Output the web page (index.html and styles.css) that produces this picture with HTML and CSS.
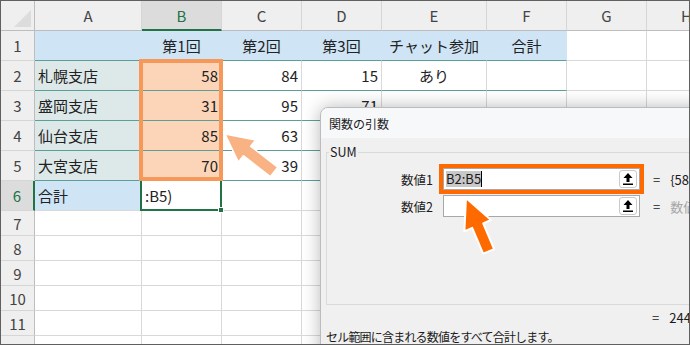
FILE: index.html
```html
<!DOCTYPE html>
<html lang="ja">

<head>
    <meta charset="UTF-8">
    <title>関数の引数 - SUM</title>
    <link rel="stylesheet" href="styles.css">
</head>

<body>
    <div class="frame">
        <div class="sheet">
            <div class="corner"></div>
            <div class="h">A</div><div class="h sel">B</div><div class="h">C</div><div class="h">D</div><div class="h">E</div><div class="h">F</div><div class="h">G</div><div class="h">H</div>

            <div class="rh">1</div>
            <div class="c blue tl"></div><div class="c blue tl ctr">第1回</div><div class="c blue tl ctr">第2回</div><div class="c blue tl ctr">第3回</div><div class="c blue tl ctr">チャット参加</div><div class="c blue tl ctr">合計</div><div class="c"></div><div class="c"></div>

            <div class="rh">2</div>
            <div class="c tint tl">札幌支店</div><div class="c peach tl num">58</div><div class="c tl num">84</div><div class="c tl num">15</div><div class="c tl ctr">あり</div><div class="c tl"></div><div class="c"></div><div class="c"></div>

            <div class="rh">3</div>
            <div class="c tint tl">盛岡支店</div><div class="c peach tl num">31</div><div class="c tl num">95</div><div class="c tl num">71</div><div class="c tl"></div><div class="c tl"></div><div class="c"></div><div class="c"></div>

            <div class="rh">4</div>
            <div class="c tint tl">仙台支店</div><div class="c peach tl num">85</div><div class="c tl num">63</div><div class="c tl"></div><div class="c tl"></div><div class="c tl"></div><div class="c"></div><div class="c"></div>

            <div class="rh">5</div>
            <div class="c tint tl">大宮支店</div><div class="c peach tl num">70</div><div class="c tl num">39</div><div class="c tl"></div><div class="c tl"></div><div class="c tl"></div><div class="c"></div><div class="c"></div>

            <div class="rh sel">6</div>
            <div class="c blue">合計</div><div class="c">:B5)</div><div class="c"></div><div class="c"></div><div class="c"></div><div class="c"></div><div class="c"></div><div class="c"></div>

            <div class="rh">7</div>
            <div class="c"></div><div class="c"></div><div class="c"></div><div class="c"></div><div class="c"></div><div class="c"></div><div class="c"></div><div class="c"></div>
            <div class="rh">8</div>
            <div class="c"></div><div class="c"></div><div class="c"></div><div class="c"></div><div class="c"></div><div class="c"></div><div class="c"></div><div class="c"></div>
            <div class="rh">9</div>
            <div class="c"></div><div class="c"></div><div class="c"></div><div class="c"></div><div class="c"></div><div class="c"></div><div class="c"></div><div class="c"></div>
            <div class="rh">10</div>
            <div class="c"></div><div class="c"></div><div class="c"></div><div class="c"></div><div class="c"></div><div class="c"></div><div class="c"></div><div class="c"></div>
            <div class="rh">11</div>
            <div class="c"></div><div class="c"></div><div class="c"></div><div class="c"></div><div class="c"></div><div class="c"></div><div class="c"></div><div class="c"></div>
            <div class="rh">12</div>
            <div class="c"></div><div class="c"></div><div class="c"></div><div class="c"></div><div class="c"></div><div class="c"></div><div class="c"></div><div class="c"></div>
        </div>

        <!-- reference range and active cell -->
        <div class="active"></div>
        <div class="handle"></div>
        <div class="range"></div>

        <div class="dialog">
            <div class="dlg-title">関数の引数</div>
            <div class="dlg-body">
                <fieldset class="group">
                    <legend>SUM</legend>
                    <div class="args">
                        <span class="lbl">数値1</span>
                        <div class="field hot">
                            <span class="picked">B2:B5</span><span class="caret"></span>
                            <span class="upbtn"><svg width="10" height="12" viewBox="0 0 10 12"><path d="M5 0 9.5 5H6.5V9H3.5V5H.5Z" fill="#000"/><rect x="0" y="10.5" width="10" height="1.5" fill="#000"/></svg></span>
                        </div>
                        <span class="val"><span class="eq">=</span>{58;31;85;70}</span>

                        <span class="lbl">数値2</span>
                        <div class="field">
                            <span></span>
                            <span class="upbtn"><svg width="10" height="12" viewBox="0 0 10 12"><path d="M5 0 9.5 5H6.5V9H3.5V5H.5Z" fill="#000"/><rect x="0" y="10.5" width="10" height="1.5" fill="#000"/></svg></span>
                        </div>
                        <span class="val"><span class="eq">=</span><span class="muted">数値</span></span>
                    </div>
                </fieldset>
                <div class="total"><span class="eq">=</span>244</div>
                <div class="desc">セル範囲に含まれる数値をすべて合計します。</div>
            </div>
        </div>

        <svg class="arrows" width="690" height="345" viewBox="0 0 690 345">
            <polygon points="225,134 255.6,139.9 250.7,146.3 277.7,167.2 270.3,176.6 243.3,155.7 238.4,162.1" fill="#f9b283" stroke="#fff" stroke-width="1.5" stroke-linejoin="round"/>
            <polygon points="466,198 491,220 483.2,223.3 494.1,249.1 483.1,253.7 472.2,227.9 464.4,231.3" fill="#ff6a00" stroke="#fff" stroke-width="2" stroke-linejoin="round"/>
        </svg>
    </div>
</body>

</html>
```

FILE: styles.css
```css
* {
    margin: 0;
    padding: 0;
    box-sizing: border-box;
}

body {
    width: 690px;
    height: 345px;
    overflow: hidden;
    background: #fff;
    font-family: "Noto Sans CJK JP", "Noto Sans", sans-serif;
    color: #222;
}

.frame {
    position: relative;
    width: 690px;
    height: 345px;
    border: 1px solid #606060;
    overflow: hidden;
}

/* grid */

.sheet {
    display: grid;
    grid-template-columns: 34px 107px 80px 80px 80px 105px 80px 80px 80px;
    grid-template-rows: repeat(7, 30px) repeat(6, 25px);
    font-size: 15px;
}

.corner {
    position: relative;
    background: #efefef;
    border-right: 1px solid #bdbdbd;
    border-bottom: 1px solid #bdbdbd;
}

.corner::after {
    content: "";
    position: absolute;
    left: 13px;
    top: 9px;
    width: 17px;
    height: 17px;
    background: #dcdcdc;
    clip-path: polygon(100% 0, 100% 100%, 0 100%);
}

.h {
    background: #efefef;
    border-right: 1px solid #d6d6d6;
    border-bottom: 1px solid #bdbdbd;
    color: #444;
    display: flex;
    align-items: center;
    justify-content: center;
}

.h.sel {
    background: #dcdcdc;
    color: #217346;
    border-bottom: 2px solid #217346;
}

.rh {
    background: #efefef;
    border-right: 1px solid #bdbdbd;
    border-bottom: 1px solid #d6d6d6;
    color: #444;
    display: flex;
    align-items: center;
    justify-content: center;
}

.rh.sel {
    background: #dcdcdc;
    color: #217346;
    border-right: 2px solid #217346;
}

.c {
    background: #fff;
    border-right: 1px solid #d9d9d9;
    border-bottom: 1px solid #d9d9d9;
    display: flex;
    align-items: center;
    padding: 0 3px;
    white-space: nowrap;
    overflow: hidden;
}

.num {
    justify-content: flex-end;
}

.ctr {
    justify-content: center;
}

.blue {
    background: #cfe4f5;
    border-right-color: transparent;
}

.tint {
    background: #dde9e9;
    border-right-color: transparent;
}

.peach {
    background: #fcd5b8;
}

.tl {
    border-bottom-color: #5c9f98;
}

.active {
    position: absolute;
    left: 139px;
    top: 178px;
    width: 82px;
    height: 32px;
    border: 2px solid #217346;
}

.handle {
    position: absolute;
    left: 217px;
    top: 206px;
    width: 6px;
    height: 6px;
    background: #217346;
    border: 1px solid #fff;
}

.range {
    position: absolute;
    left: 138px;
    top: 58px;
    width: 84px;
    height: 122px;
    border: 4px solid #f7985b;
}

/* dialog */

.dialog {
    position: absolute;
    left: 319px;
    top: 106px;
    width: 420px;
    height: 260px;
    background: #f0f0f0;
    border: 1px solid #bcbcbc;
    border-radius: 8px;
    box-shadow: 0 0 18px rgba(0, 0, 0, 0.28);
    overflow: hidden;
    color: #1a1a1a;
    font-size: 12px;
}

.dlg-title {
    height: 30px;
    background: #f7f8fa;
    padding-left: 8px;
    display: flex;
    align-items: center;
}

.dlg-body {
    padding: 6px 0 0 5px;
}

.group {
    height: 161px;
    border: 1px solid #dadada;
    padding: 8px 0 0 0;
}

.group legend {
    margin-left: 2px;
    padding: 0 1px;
    font-size: 12.5px;
    line-height: 16px;
}

.args {
    display: grid;
    grid-template-columns: 106px 197px auto;
    column-gap: 10px;
    row-gap: 5px;
    align-items: center;
    font-size: 12.5px;
}

.lbl {
    text-align: right;
}

.field {
    height: 22px;
    background: #fff;
    border: 1px solid #a8a8a8;
    padding: 0 2px;
    display: flex;
    align-items: center;
}

.field.hot {
    outline: 4px solid #ff6a00;
}

.picked {
    background: #c8c8c8;
    font-size: 13px;
    line-height: 16px;
}

.caret {
    width: 1px;
    height: 16px;
    background: #000;
}

.upbtn {
    margin-left: auto;
    width: 18px;
    height: 18px;
    border: 1px solid #cacaca;
    border-radius: 3px;
    background: #fff;
    display: flex;
    align-items: center;
    justify-content: center;
}

.val {
    white-space: nowrap;
    font-size: 13px;
}

.eq {
    display: inline-block;
    margin: 0 10px 0 3px;
}

.muted {
    color: #a6a6a6;
}

.total {
    margin: 5px 0 0 323px;
    font-size: 13px;
    line-height: 16px;
    white-space: nowrap;
}

.desc {
    margin-top: 3px;
    font-size: 12px;
    line-height: 16px;
    letter-spacing: -0.8px;
    white-space: nowrap;
}

.arrows {
    position: absolute;
    left: -1px;
    top: -1px;
}
```
